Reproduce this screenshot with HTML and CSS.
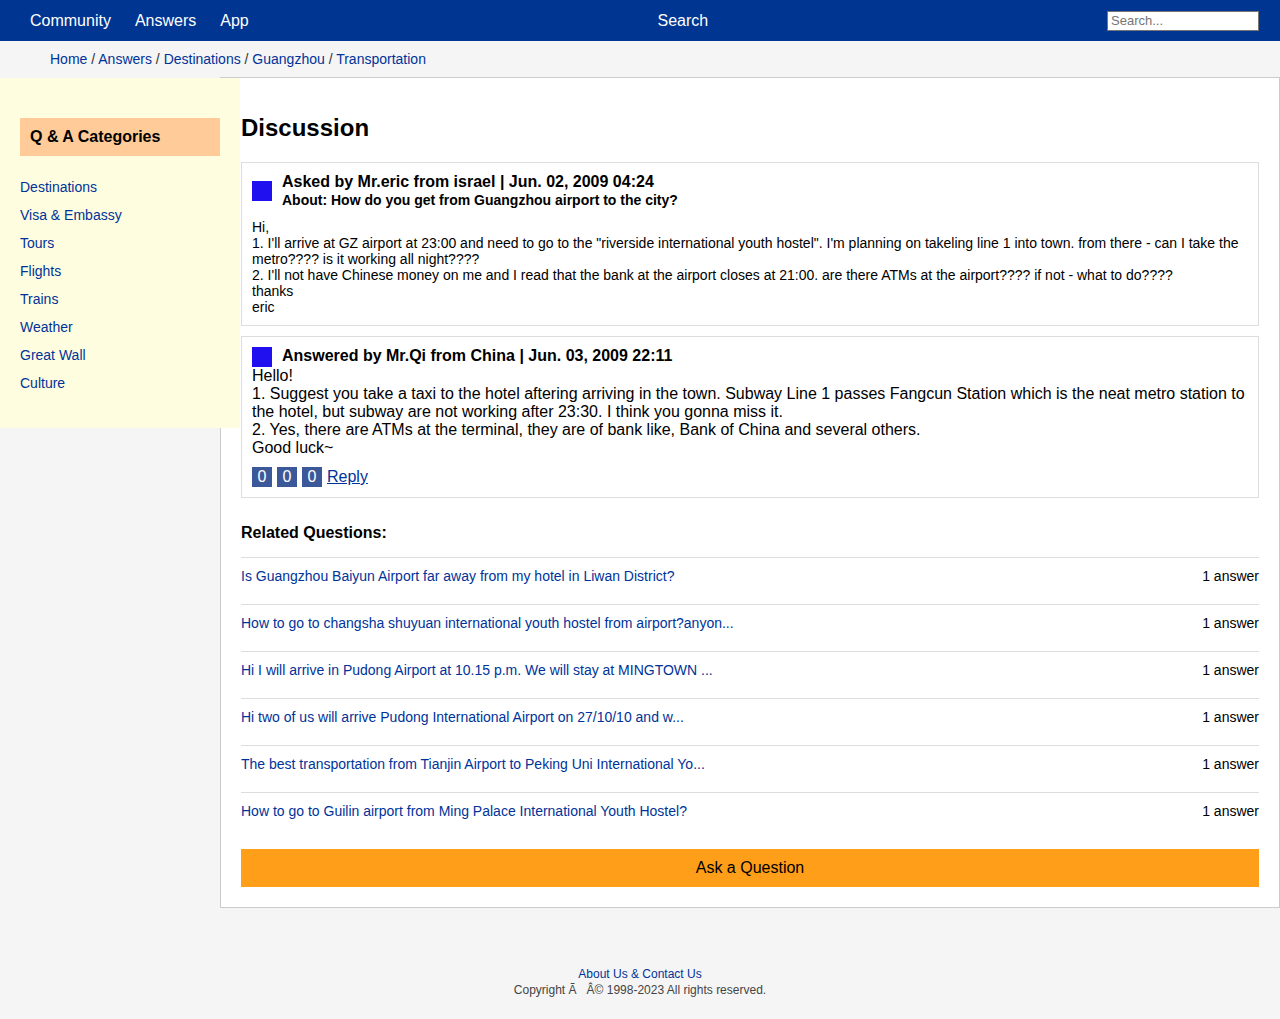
FILE: index.html
```html
<!DOCTYPE html>
<html lang="en">
<head>
<meta charset="utf-8">
<title>Discussion - How do you get from Guangzhou airport to the city?</title>
<link rel="stylesheet" href="styles.css">
</head>
<body>
<header class="topbar">
  <nav class="topnav">
    <a href="#">Community</a>
    <a href="#">Answers</a>
    <a href="#">App</a>
  </nav>
  <div class="topsearch">Search</div>
  <input class="searchbox" type="text" placeholder="Search...">
</header>

<div class="crumbs">
  <a href="#">Home</a> / <a href="#">Answers</a> / <a href="#">Destinations</a> / <a href="#">Guangzhou</a> / <a href="#">Transportation</a>
</div>

<div class="layout">
  <aside class="sidebar">
    <div class="cat-title">Q &amp; A Categories</div>
    <ul class="cats">
      <li><a href="#">Destinations</a></li>
      <li><a href="#">Visa &amp; Embassy</a></li>
      <li><a href="#">Tours</a></li>
      <li><a href="#">Flights</a></li>
      <li><a href="#">Trains</a></li>
      <li><a href="#">Weather</a></li>
      <li><a href="#">Great Wall</a></li>
      <li><a href="#">Culture</a></li>
    </ul>
  </aside>

  <main class="main">
    <h2 class="page-title">Discussion</h2>

    <div class="post question">
      <div class="post-head">
        <span class="avatar"></span>
        <div>
          <div class="post-title">Asked by Mr.eric from israel | Jun. 02, 2009 04:24</div>
          <div class="post-about">About: How do you get from Guangzhou airport to the city?</div>
        </div>
      </div>
      <div class="q-body">Hi,<br>1. I'll arrive at GZ airport at 23:00 and need to go to the "riverside international youth hostel". I'm planning on takeling line 1 into town. from there - can I take the metro???? is it working all night????<br>2. I'll not have Chinese money on me and I read that the bank at the airport closes at 21:00. are there ATMs at the airport???? if not - what to do????<br>thanks<br>eric</div>
    </div>

    <div class="post answer">
      <div class="post-head top">
        <span class="avatar"></span>
        <div class="post-title">Answered by Mr.Qi from China | Jun. 03, 2009 22:11</div>
      </div>
      <div class="a-body">Hello!<br>1. Suggest you take a taxi to the hotel aftering arriving in the town. Subway Line 1 passes Fangcun Station which is the neat metro station to the hotel, but subway are not working after 23:30. I think you gonna miss it.<br>2. Yes, there are ATMs at the terminal, they are of bank like, Bank of China and several others.<br>Good luck~</div>
      <div class="votes">
        <span class="vote">0</span>
        <span class="vote">0</span>
        <span class="vote">0</span>
        <a href="#" class="reply">Reply</a>
      </div>
    </div>

    <h3 class="related-title">Related Questions:</h3>
    <ul class="related">
      <li><a href="#">Is Guangzhou Baiyun Airport far away from my hotel in Liwan District?</a><span>1 answer</span></li>
      <li><a href="#">How to go to changsha shuyuan international youth hostel from airport?anyon...</a><span>1 answer</span></li>
      <li><a href="#">Hi I will arrive in Pudong Airport at 10.15 p.m. We will stay at MINGTOWN ...</a><span>1 answer</span></li>
      <li><a href="#">Hi two of us will arrive Pudong International Airport on 27/10/10 and w...</a><span>1 answer</span></li>
      <li><a href="#">The best transportation from Tianjin Airport to Peking Uni International Yo...</a><span>1 answer</span></li>
      <li><a href="#">How to go to Guilin airport from Ming Palace International Youth Hostel?</a><span>1 answer</span></li>
    </ul>

    <div class="ask">Ask a Question</div>
  </main>
</div>

<footer class="footer">
  <a href="#">About Us &amp; Contact Us</a>
  <div>Copyright Ã&nbsp;&nbsp;&nbsp;Â© 1998-2023 All rights reserved.</div>
</footer>
</body>
</html>
```

FILE: styles.css
```css
* { box-sizing: border-box; }

body {
  margin: 0;
  background: #f5f5f5;
  font-family: "Liberation Sans", Arial, sans-serif;
  color: #000;
}

a { color: #003399; text-decoration: none; }

.topbar {
  height: 41px;
  background: #003591;
  display: flex;
  align-items: center;
  justify-content: space-between;
  padding: 0 21px 0 30px;
}

.topnav {
  display: flex;
  gap: 24px;
}

.topnav a,
.topsearch {
  color: #fff;
  font-size: 16px;
  line-height: 20px;
}

.topsearch {
  flex: 1;
  text-align: center;
  padding-left: 10px;
}

.searchbox {
  width: 152px;
  height: 20px;
  border: 1px solid #767676;
  padding: 1px 3px;
  font-family: "Liberation Sans", Arial, sans-serif;
  font-size: 13px;
  background: #fff;
  margin: 0;
}

.searchbox::placeholder { color: #757575; }

.crumbs {
  padding: 10px 50px;
  font-size: 14px;
  line-height: 16px;
  color: #333;
}

.layout {
  display: flex;
  align-items: flex-start;
}

.sidebar {
  position: relative;
  z-index: 1;
  flex: 0 0 240px;
  margin-top: 1px;
  background: #fffde0;
  padding: 40px 20px 31px;
}

.cat-title {
  background: #ffcc99;
  height: 38px;
  line-height: 38px;
  padding-left: 10px;
  font-size: 16px;
  font-weight: bold;
}

.cats {
  list-style: none;
  margin: 17px 0 0;
  padding: 0;
}

.cats li {
  height: 28px;
  line-height: 28px;
  font-size: 14px;
}

.main {
  flex: 1;
  margin-left: -20px;
  background: #fff;
  border: 1px solid #ccc;
  padding: 0 20px 20px;
}

.page-title {
  margin: 36px 0 20px;
  font-size: 24px;
  line-height: 28px;
  font-weight: bold;
}

.post {
  border: 1px solid #ddd;
  padding: 10px;
}

.post + .post { margin-top: 10px; }

.post-head {
  display: flex;
  align-items: center;
  gap: 10px;
}

.post-head.top {
  align-items: flex-start;
  height: 20px;
}

.avatar {
  flex: 0 0 20px;
  width: 20px;
  height: 20px;
  background: #2010f0;
}

.post-title {
  font-size: 16px;
  line-height: 18px;
  font-weight: bold;
}

.post-about {
  font-size: 14px;
  line-height: 18px;
  font-weight: bold;
}

.q-body {
  margin-top: 10px;
  font-size: 14px;
  line-height: 16px;
}

.a-body {
  font-size: 16px;
  line-height: 18px;
}

.votes {
  display: flex;
  align-items: center;
  gap: 5px;
  margin-top: 10px;
  height: 20px;
}

.vote {
  width: 20px;
  height: 20px;
  background: #3b5998;
  color: #fff;
  font-size: 16px;
  line-height: 20px;
  text-align: center;
}

.reply {
  font-size: 16px;
  line-height: 20px;
  text-decoration: underline;
}

.related-title {
  margin: 26px 0 15px;
  font-size: 16px;
  line-height: 18px;
  font-weight: bold;
}

.related {
  list-style: none;
  margin: 0;
  padding: 0;
}

.related li {
  display: flex;
  justify-content: space-between;
  border-top: 1px solid #ddd;
  padding: 10px 0 20px;
  font-size: 14px;
  line-height: 16px;
}

.related li span { color: #000; }

.ask {
  margin-top: 10px;
  height: 38px;
  line-height: 38px;
  background: #ff9e18;
  text-align: center;
  font-size: 16px;
}

.footer {
  margin-top: 58px;
  padding-bottom: 21px;
  text-align: center;
  font-size: 12px;
  line-height: 16px;
  color: #444;
}
```
